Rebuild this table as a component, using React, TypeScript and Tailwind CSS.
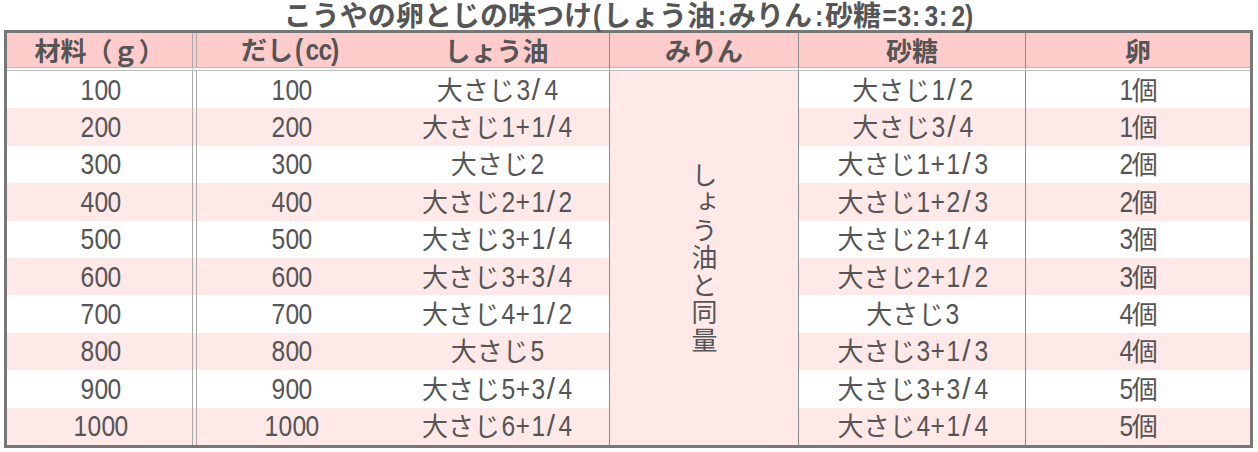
import React from 'react';

const jp = "font-['Noto_Sans_CJK_JP',sans-serif]";

const rows: string[][] = [
  ['100', '100', '大さじ3/4', '大さじ1/2', '1個'],
  ['200', '200', '大さじ1+1/4', '大さじ3/4', '1個'],
  ['300', '300', '大さじ2', '大さじ1+1/3', '2個'],
  ['400', '400', '大さじ2+1/2', '大さじ1+2/3', '2個'],
  ['500', '500', '大さじ3+1/4', '大さじ2+1/4', '3個'],
  ['600', '600', '大さじ3+3/4', '大さじ2+1/2', '3個'],
  ['700', '700', '大さじ4+1/2', '大さじ3', '4個'],
  ['800', '800', '大さじ5', '大さじ3+1/3', '4個'],
  ['900', '900', '大さじ5+3/4', '大さじ3+3/4', '5個'],
  ['1000', '1000', '大さじ6+1/4', '大さじ4+1/4', '5個'],
];

// each latin char sits in a fixed-width box, glyph squeezed so digits read tall and narrow
const boxW: Record<string, string> = {
  '/': 'w-[14px]',
  '+': 'w-[16px]',
  c: 'w-[12.5px]',
  '(': 'w-[11px]',
  ')': 'w-[11px]',
  ':': 'w-[13px]',
  '=': 'w-[15px]',
};

function Latin({ ch }: { ch: string }) {
  return (
    <span
      className={`inline-block text-center leading-[28px] font-['Liberation_Sans',sans-serif] text-[30px] ${boxW[ch] ?? 'w-[13.7px]'}`}
    >
      <span className={`inline-block ${ch === '/' ? 'pl-[1px]' : 'scale-x-[0.82]'}`}>{ch}</span>
    </span>
  );
}

function Txt({ s }: { s: string }) {
  return (
    <span>
      {[...s].map((ch, i) =>
        /[\x21-\x7e]/.test(ch) ? <Latin key={i} ch={ch} /> : <span key={i}>{ch}</span>
      )}
    </span>
  );
}

const headCell =
  'flex items-center justify-center bg-[#ffcccc] bg-clip-padding border-b-4 [border-bottom-style:double] border-b-[#bbb] font-bold';

export default function App() {
  return (
    <div className={`w-[1258px] h-[452px] bg-white text-[#555] text-[26px] leading-none ${jp}`}>
      <div className="h-[30px] flex items-center justify-center font-bold text-[28px]">
        <Txt s="こうやの卵とじの味つけ(しょう油:みりん:砂糖=3:3:2)" />
      </div>

      <div className="ml-[4px] w-[1249px] border-[3px] border-[#777]">
        <div className="grid grid-cols-[186px_191px_226px_189px_227px_224px] grid-rows-[38px_repeat(10,37.4px)]">
          {/* header */}
          <div className={`${headCell} border-r border-r-[#aaa]`}>
            <span>材料（ｇ）</span>
          </div>
          <div className={`${headCell} shadow-[inset_3px_0_0_#ffcccc,inset_4px_0_0_#aaa] pl-1`}>
            <Txt s="だし(cc)" />
          </div>
          <div className={`${headCell} border-r border-r-[#888]`}>しょう油</div>
          <div className={`${headCell} border-r border-r-[#888]`}>みりん</div>
          <div className={`${headCell} border-r border-r-[#888]`}>砂糖</div>
          <div className={headCell}>卵</div>

          {/* merged mirin column */}
          <div className="col-start-4 row-start-2 row-span-10 bg-[#ffe8e8] border-r border-[#888] flex items-center justify-center">
            <span className="[writing-mode:vertical-rl] tracking-[1.5px] leading-none">しょう油と同量</span>
          </div>

          {rows.map((r, i) => {
            const bg = i % 2 === 1 ? 'bg-[#ffe8e8]' : 'bg-white';
            const gap =
              i % 2 === 1
                ? 'shadow-[inset_3px_0_0_#ffe8e8,inset_4px_0_0_#aaa]'
                : 'shadow-[inset_3px_0_0_#fff,inset_4px_0_0_#aaa]';
            return (
              <React.Fragment key={r[0]}>
                <div className={`${bg} border-r border-[#aaa] flex items-center justify-center`}>
                  <Txt s={r[0]} />
                </div>
                <div className={`${bg} ${gap} pl-1 flex items-center justify-center`}>
                  <Txt s={r[1]} />
                </div>
                <div className={`${bg} border-r border-[#888] flex items-center justify-center`}>
                  <Txt s={r[2]} />
                </div>
                <div className={`${bg} border-r border-[#888] flex items-center justify-center`}>
                  <Txt s={r[3]} />
                </div>
                <div className={`${bg} flex items-center justify-center`}>
                  <Txt s={r[4]} />
                </div>
              </React.Fragment>
            );
          })}
        </div>
      </div>
    </div>
  );
}
